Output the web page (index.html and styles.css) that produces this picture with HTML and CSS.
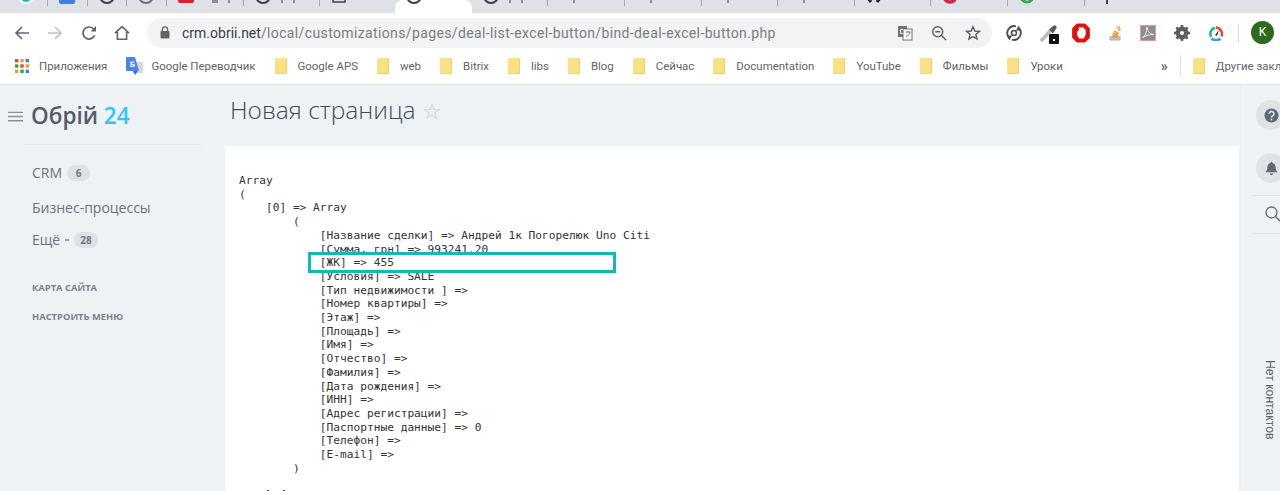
FILE: index.html
```html
<!DOCTYPE html>
<html lang="ru">
<head>
<meta charset="utf-8">
<title>Новая страница</title>
<link rel="stylesheet" href="styles.css">
</head>
<body>
<header class="chrome">
  <div class="tabs">
    <div class="tab t48 sep"><svg class="tab-ic first" viewBox="0 0 16 16"><circle cx="8" cy="8" r="7" fill="#1fb6c9" stroke="#fff" stroke-width="2"/></svg></div>
    <div class="tab t40 sep"><svg class="tab-ic" viewBox="0 0 16 16"><rect x="0" y="0" width="16" height="16" rx="2" fill="#3f7fe0"/></svg></div>
    <div class="tab t40 sep"><svg class="tab-ic" viewBox="0 0 16 16"><circle cx="8" cy="8" r="7" fill="none" stroke="#3c4043" stroke-width="2"/></svg></div>
    <div class="tab t40 sep"><svg class="tab-ic" viewBox="0 0 16 16"><circle cx="8" cy="8" r="7" fill="none" stroke="#6c7074" stroke-width="2"/></svg></div>
    <div class="tab t77 sep"><svg class="tab-ic up" viewBox="0 0 16 16"><rect x="0" y="0" width="16" height="16" rx="2" fill="#e02020"/></svg><i class="tick wide"></i><i class="tick"></i></div>
    <div class="tab t77 sep"><svg class="tab-ic" viewBox="0 0 16 16"><circle cx="8" cy="8" r="7" fill="none" stroke="#3c4043" stroke-width="2"/></svg><i class="tick"></i><i class="tick"></i></div>
    <div class="tab t75"><svg class="tab-ic" viewBox="0 0 16 16"><rect x="2" y="1" width="12" height="13" fill="none" stroke="#3c4043" stroke-width="1.5"/></svg></div>
    <div class="tab t77 active"><svg class="tab-ic" viewBox="0 0 16 16"><circle cx="8" cy="8" r="7" fill="none" stroke="#3c4043" stroke-width="2"/></svg></div>
    <div class="tab t77 sep"><svg class="tab-ic" viewBox="0 0 16 16"><circle cx="8" cy="8" r="7" fill="none" stroke="#3c4043" stroke-width="2"/></svg><i class="tick"></i><i class="tick"></i></div>
    <div class="tab t77 sep"><i class="tick off"></i></div>
    <div class="tab t77 sep"><i class="tick off"></i></div>
    <div class="tab t77 sep"><i class="tick off"></i></div>
    <div class="tab t77 sep"><i class="tick off"></i></div>
    <div class="tab t77 sep"><svg class="tab-ic" viewBox="0 0 16 16"><path d="M5 4 1 9l4 5M11 4l4 5-4 5" fill="none" stroke="#26282b" stroke-width="3"/></svg></div>
    <div class="tab t77 sep"><svg class="tab-ic" viewBox="0 0 16 16"><circle cx="8" cy="8" r="6" fill="none" stroke="#d81e4a" stroke-width="3.4"/></svg></div>
    <div class="tab t77 sep"><svg class="tab-ic" viewBox="0 0 16 16"><circle cx="8" cy="8" r="6" fill="#fff" stroke="#35a853" stroke-width="3"/></svg></div>
    <div class="tab last"><i class="tick dark"></i></div>
  </div>

  <div class="toolbar">
    <svg class="nav-ic" viewBox="0 0 16 16"><path d="M15 8H2M8 2 2 8l6 6" fill="none" stroke="#5f6368" stroke-width="1.6"/></svg>
    <svg class="nav-ic" viewBox="0 0 16 16"><path d="M1 8h13M8 2l6 6-6 6" fill="none" stroke="#bdc1c6" stroke-width="1.6"/></svg>
    <svg class="nav-ic" viewBox="0 0 16 16"><path d="M13.6 10.2A6 6 0 1 1 12.2 3.7L14 5.6" fill="none" stroke="#5f6368" stroke-width="1.7"/><path d="M15 1v5.4H9.6z" fill="#5f6368"/></svg>
    <svg class="nav-ic" viewBox="0 0 16 16"><path d="M1 8.2 8 1.6l7 6.6M3.4 7v7.2h9.2V7" fill="none" stroke="#5f6368" stroke-width="1.6"/></svg>
    <div class="omnibox">
      <svg class="lock" viewBox="0 0 10 13"><path d="M2.4 5V3.4a2.6 2.6 0 0 1 5.2 0V5" fill="none" stroke="#5f6368" stroke-width="1.3"/><rect x="0.5" y="5" width="9" height="7.5" rx="1" fill="#5f6368"/></svg>
      <div class="url"><span class="host">crm.obrii.net</span><span class="path">/local/customizations/pages/deal-list-excel-button/bind-deal-excel-button.php</span></div>
      <svg class="omni-ic" viewBox="0 0 16 16"><rect x="1" y="1" width="9" height="11" fill="#6f7377"/><rect x="6" y="4" width="9" height="11" fill="#fff" stroke="#6f7377"/><path d="M8.500 7h5M11 6v1.500M9 12c2-1 3.500-3 4-5" fill="none" stroke="#6f7377"/><path d="M6 4.500H3.500v4H6" fill="none" stroke="#fff"/></svg>
      <svg class="omni-ic" viewBox="0 0 16 16"><circle cx="6.700" cy="6.700" r="5" fill="none" stroke="#5f6368" stroke-width="1.500"/><path d="M10.500 10.500 15 15M4.200 6.700h5" fill="none" stroke="#5f6368" stroke-width="1.500"/></svg>
      <svg class="omni-ic" viewBox="0 0 16 16"><path d="M8 1.800 9.800 6l4.600.4-3.500 3 1.100 4.500L8 11.500l-4 2.400 1.100-4.500-3.500-3L6.200 6z" fill="none" stroke="#5f6368" stroke-width="1.500"/></svg>
    </div>
    <div class="exts">
      <svg class="ext sync" viewBox="0 0 16 16"><path d="M10 1.300A7 7 0 0 0 2.500 12M6 14.700A7 7 0 0 0 13.500 4" fill="none" stroke="#4c5054" stroke-width="1.900"/><path d="M.5 10.500H6L3.500 15.500zM15.500 5.500H10L12.500 .5z" fill="#4c5054"/><circle cx="8" cy="8" r="2.500" fill="none" stroke="#4c5054" stroke-width="1.600"/></svg>
      <svg class="ext drop" viewBox="0 0 20 20"><path d="M2 17 12 6" stroke="#b9bcc0" stroke-width="3.500"/><path d="M10 5.500 14 9.500 17 5a2 2 0 0 0-3-3z" fill="#55595d"/><rect x="10" y="10" width="10" height="10" rx="1" fill="#111"/><rect x="14" y="15" width="2" height="2" fill="#fff"/></svg>
      <svg class="ext stop" viewBox="0 0 16 18"><path d="M5 .5h6a2 2 0 0 1 1.500.7l3 3a2 2 0 0 1 .5 1.300v7a2 2 0 0 1-.5 1.300l-3 3a2 2 0 0 1-1.500.7H5a2 2 0 0 1-1.500-.7l-3-3A2 2 0 0 1 0 12.500v-7a2 2 0 0 1 .5-1.300l3-3A2 2 0 0 1 5 .5z" fill="#e01010"/><path d="M4.500 7.500a.800.800 0 0 1 1.500-.2V4.500a.900.900 0 0 1 1.500-.3.900.900 0 0 1 1.700.1.900.900 0 0 1 1.700.5v1a.800.800 0 0 1 1.300.5v4.200L10.500 14H6.500L4.500 11z" fill="#fff"/></svg>
      <svg class="ext stack" viewBox="0 0 16 16"><path d="M3 11v4h10v-4" fill="#c3c6c9" stroke="#a8acb0"/><path d="M5 12h6M5.200 10l5.600.6M5.800 8l5.400 1.600M7 5.800l4.800 2.800" stroke="#e8973a" stroke-width="1.400"/><path d="M9.500 1l3 4.800M12 .8l1.200 5" stroke="#f0b35c" stroke-width="1.400"/></svg>
      <svg class="ext pdf" viewBox="0 0 16 16"><rect x=".5" y=".5" width="15" height="15" fill="#8c8e92" stroke="#e19a9c"/><path d="M2.500 12.500c3-1.500 4.500-6 4-9.500-.2-1 1-1 1 0 0 3.500 2.500 6 6 6.500-3.500 0-7 1-11 3z" fill="none" stroke="#eee" stroke-width="1"/></svg>
      <svg class="ext gear" viewBox="0 0 16 16"><circle cx="8" cy="8" r="4.200" fill="none" stroke="#5b5e62" stroke-width="4.400"/><path d="M8 0v16M0 8h16M2.300 2.300l11.400 11.400M13.700 2.300 2.300 13.700" stroke="#5b5e62" stroke-width="2.600" stroke-dasharray="3 10"/></svg>
      <svg class="ext gauge" viewBox="0 0 16 16"><path d="M3 12a6.500 6.500 0 0 1 4-9.300" fill="none" stroke="#1fb58f" stroke-width="2.500"/><path d="M8 2.500a6.500 6.500 0 0 1 5.500 9" fill="none" stroke="#e5453c" stroke-width="2.500"/><path d="M3.500 13.500a6.500 6.500 0 0 0 9 0" fill="none" stroke="#2fa3dc" stroke-width="2.500"/><path d="M7 10l4-5-2 6z" fill="#333"/></svg>
      <span class="ext-sep"></span>
      <span class="avatar">K</span>
    </div>
  </div>

  <div class="bookmarks">
    <div class="bm apps">
      <svg class="grid-ic" viewBox="0 0 14 14"><rect width="3.400" height="3.400" fill="#e0452f"/><rect x="5.300" width="3.400" height="3.400" fill="#e0a42a"/><rect x="10.600" width="3.400" height="3.400" fill="#3f7fe0"/><rect y="5.300" width="3.400" height="3.400" fill="#3f9d4f"/><rect x="5.300" y="5.300" width="3.400" height="3.400" fill="#e0452f"/><rect x="10.600" y="5.300" width="3.400" height="3.400" fill="#e0a42a"/><rect y="10.600" width="3.400" height="3.400" fill="#e0a42a"/><rect x="5.300" y="10.600" width="3.400" height="3.400" fill="#3f9d4f"/><rect x="10.600" y="10.600" width="3.400" height="3.400" fill="#3f7fe0"/></svg>
      <span>Приложения</span>
    </div>
    <div class="bm gt">
      <svg class="gt-ic" viewBox="0 0 17 18"><rect x="7" y="5" width="10" height="11" fill="#d6d8da"/><path d="M0 1a1 1 0 0 1 1-1h8l4 14H1a1 1 0 0 1-1-1z" fill="#4a86e8"/><path d="M7 14h5l-3 4z" fill="#3b6fc4"/><path d="M8.500 5H5v4.500h3V7.300H6.200" fill="none" stroke="#fff" stroke-width="1.200"/></svg>
      <span>Google Переводчик</span>
    </div>
    <div class="bm"><i class="folder"></i><span>Google APS</span></div>
    <div class="bm"><i class="folder"></i><span>web</span></div>
    <div class="bm"><i class="folder"></i><span>Bitrix</span></div>
    <div class="bm"><i class="folder"></i><span>libs</span></div>
    <div class="bm"><i class="folder"></i><span>Blog</span></div>
    <div class="bm"><i class="folder"></i><span>Сейчас</span></div>
    <div class="bm"><i class="folder"></i><span>Documentation</span></div>
    <div class="bm"><i class="folder"></i><span>YouTube</span></div>
    <div class="bm"><i class="folder"></i><span>Фильмы</span></div>
    <div class="bm"><i class="folder"></i><span>Уроки</span></div>
    <div class="bm-end">
      <span class="more">»</span>
      <span class="bm-sep"></span>
      <div class="bm"><i class="folder"></i><span>Другие закладки</span></div>
    </div>
  </div>
</header>

<div class="page">
  <aside class="sidebar">
    <div class="brand">
      <svg class="burger" viewBox="0 0 16 11"><path d="M0 1h16M0 5.500h16M0 10h16" stroke="#8a9299" stroke-width="1.400"/></svg>
      <span class="logo">Обрій <b>24</b></span>
    </div>
    <nav class="menu">
      <div class="item first-item">CRM <span class="badge">6</span></div>
      <div class="item second-item">Бизнес-процессы</div>
      <div class="item third-item">Ещё <span class="caret"></span> <span class="badge">28</span></div>
    </nav>
    <div class="link map">КАРТА САЙТА</div>
    <div class="link">НАСТРОИТЬ МЕНЮ</div>
  </aside>

  <main class="content">
    <h1 class="title">Новая страница <span class="star">☆</span></h1>
    <section class="panel">
<pre class="dump">Array
(
    [0] =&gt; Array
        (
            [Название сделки] =&gt; Андрей 1к Погорелюк Uno Citi
            [Сумма, грн] =&gt; 993241.20
            [ЖК] =&gt; 455
            [Условия] =&gt; SALE
            [Тип недвижимости ] =&gt; 
            [Номер квартиры] =&gt; 
            [Этаж] =&gt; 
            [Площадь] =&gt; 
            [Имя] =&gt; 
            [Отчество] =&gt; 
            [Фамилия] =&gt; 
            [Дата рождения] =&gt; 
            [ИНН] =&gt; 
            [Адрес регистрации] =&gt; 
            [Паспортные данные] =&gt; 0
            [Телефон] =&gt; 
            [E-mail] =&gt; 
        )</pre>
      <div class="next-row"></div>
      <div class="highlight"></div>
    </section>
  </main>

  <aside class="rail">
    <div class="round"><svg viewBox="0 0 16 16"><circle cx="8" cy="8" r="7.500" fill="#5d6b78"/><path d="M5.500 6.200a2.500 2.500 0 1 1 3.700 2.200c-.8.500-1.200.9-1.200 1.800" fill="none" stroke="#e6e9eb" stroke-width="1.600"/><circle cx="8" cy="12.300" r="1" fill="#e6e9eb"/></svg></div>
    <div class="round bell"><svg viewBox="0 0 16 18"><path d="M8 1a1.200 1.200 0 0 1 1.200 1.300C12 3 13 5.500 13 8c0 3 1 4 2.500 5.500H.5C2 12 3 11 3 8c0-2.500 1-5 3.800-5.700A1.200 1.200 0 0 1 8 1z" fill="#5d6b78"/><path d="M6 15h4a2 2 0 0 1-4 0z" fill="#5d6b78"/></svg></div>
    <div class="search"><svg viewBox="0 0 17 17"><circle cx="6.500" cy="6.500" r="5.500" fill="none" stroke="#5d6b78" stroke-width="1.300"/><path d="M10.500 10.500 16.500 16.500" stroke="#5d6b78" stroke-width="1.500"/></svg></div>
    <div class="contacts">Нет контактов</div>
  </aside>
</div>
</body>
</html>
```
FILE: styles.css
```css
* { box-sizing: border-box; }
html, body { margin: 0; height: 491px; overflow: hidden; }
body { background: #eef2f4; font-family: "Open Sans", sans-serif; display: flex; flex-direction: column; }

.chrome { flex: none; height: 85px; background: #fff; border-bottom: 1px solid #e3e5e8; }

.tabs { display: flex; align-items: flex-start; height: 13px; background: #dee1e6; overflow: hidden; }
.tab { flex: none; height: 13px; display: flex; align-items: flex-start; padding-left: 11px; gap: 10px; overflow: hidden; }
.t48 { width: 48px; } .t40 { width: 39.7px; } .t77 { width: 76.6px; } .t75 { width: 75px; }
.last { flex: 1; }
.sep { border-right: 1px solid #a4a7ab; height: 6px; }
.tab.active { background: #fff; height: 13px; border-radius: 8px 8px 0 0; }
.tab-ic { flex: none; width: 16px; height: 16px; margin-top: -12px; }
.tab-ic.first { margin-left: 7px; }
.tab-ic.up { margin-top: -13px; }
.tick { display: block; flex: none; width: 2px; height: 3px; background: #8b8e92; }
.tick.wide { width: 6px; margin-left: 8px; }
.tick.off { margin-left: 14px; }
.tick.dark { background: #444; margin-left: 10px; height: 4px; }

.toolbar { height: 35px; display: flex; align-items: center; padding-left: 14px; padding-top: 4px; }
.nav-ic { flex: none; width: 16px; height: 16px; margin-right: 17.25px; }
.omnibox { flex: none; width: 845px; height: 30px; background: #f1f3f4; border-radius: 15px; display: flex; align-items: center; padding-left: 13px; }
.lock { flex: none; width: 10px; height: 13px; }
.url { flex: 1; margin-left: 12px; font: 14px/18px Roboto, sans-serif; color: #7a7d81; white-space: nowrap; }
.host { color: #3c4043; }
.path { letter-spacing: .37px; }
.omni-ic { flex: none; width: 16px; height: 16px; margin-right: 18px; }
.omni-ic:last-child { margin-right: 11px; }
.exts { flex: none; display: flex; align-items: center; margin-left: 14px; }
.ext { flex: none; width: 16px; height: 16px; margin-right: 18px; }
.drop { width: 20px; height: 20px; margin-left: -1px; margin-right: 13px; margin-top: 3px; }
.stop { width: 18px; height: 20px; margin-right: 17px; }
.stack { margin-right: 17px; }
.gauge { margin-right: 14px; }
.ext-sep { width: 1px; height: 18px; background: #d5d7da; margin-right: 12px; }
.avatar { width: 23px; height: 23px; border-radius: 50%; background: #2e6b1f; color: #fff; font: 12px/23px Roboto, sans-serif; text-align: center; }

.bookmarks { height: 36px; display: flex; align-items: center; padding-left: 15px; gap: 19px; white-space: nowrap; font: 11.45px/16px Roboto, sans-serif; color: #5f6368; overflow: hidden; }
.bm { display: flex; align-items: center; gap: 11px; flex: none; }
.grid-ic { width: 14px; height: 14px; }
.gt-ic { width: 17px; height: 18px; }
.gt { gap: 8px; }
.apps { gap: 10px; }
.folder { display: block; width: 12px; height: 16px; background: #fbe184; border-radius: 1px; box-shadow: inset -1px -1px 0 #f4d06a; }
.bm-end { margin-left: 79px; display: flex; align-items: center; gap: 12px; }
.more { font-size: 14px; font-weight: 700; color: #5f6368; }
.bm-sep { width: 1px; height: 22px; background: #dfe1e4; }

.page { flex: 1; display: flex; min-height: 0; }
.sidebar { flex: none; width: 225px; padding-top: 16px; }
.brand { display: flex; align-items: center; height: 30px; padding-left: 8px; }
.burger { flex: none; width: 15px; height: 11px; margin-right: 8px; }
.logo { font-size: 22.5px; font-weight: 600; line-height: 30px; color: #535c69; }
.logo b { font-weight: 600; color: #2fc6f6; }
.menu { margin: 13px 23px 0 23px; border-top: 1px solid #e7ebed; padding-left: 9px; }
.item { font-size: 14px; line-height: 20px; color: #6b737c; display: flex; align-items: center; gap: 5px; }
.first-item { margin-top: 18px; }
.second-item { margin-top: 15px; }
.third-item { margin-top: 12px; }
.badge { display: inline-block; min-width: 23px; height: 16px; padding: 0 6px; border-radius: 8px; background: #dde1e5; color: #717a84; font-size: 10px; font-weight: 700; line-height: 16px; text-align: center; }
.caret { width: 4px; height: 2px; background: #9aa1a8; }
.link { margin: 17px 0 0 32px; font-size: 9.4px; font-weight: 700; line-height: 12px; color: #7a828b; }
.map { margin-top: 32px; }

.content { flex: none; width: 1015px; display: flex; flex-direction: column; }
.title { margin: 0; height: 61px; padding: 8px 0 0 5px; font-size: 24.5px; font-weight: 300; line-height: 34px; color: #414a55; white-space: nowrap; }
.star { color: #c5cbd1; font-family: "DejaVu Sans", sans-serif; font-size: 22px; }
.panel { position: relative; flex: 1; background: #fff; margin-right: 1px; overflow: hidden; padding: 28px 0 0 14px; }
.dump { margin: 0; font: 11.2px/13.7px "DejaVu Sans Mono", monospace; color: #333; }
.next-row { width: 18px; height: 3px; margin: 15px 0 0 28px; border-left: 2px solid #555; border-right: 2px solid #555; }
.highlight { position: absolute; left: 83px; top: 106px; width: 308px; height: 21px; border: 3px solid #14b8b4; }

.rail { flex: 1; min-width: 0; position: relative; border-left: 1px solid #e8ecef; }
.round { width: 30px; height: 30px; border-radius: 50%; background: #dfe3e6; margin: 15px 0 0 15px; display: flex; align-items: center; justify-content: center; }
.round svg { width: 15px; height: 15px; }
.bell { margin-top: 23px; }
.search { margin: 12px 0 0 10px; border-top: 1px solid #e3e7ea; border-bottom: 1px solid #e3e7ea; height: 39px; padding: 10px 0 0 14px; }
.search svg { display: block; width: 17px; height: 17px; }
.contacts { position: absolute; left: 22px; top: 275px; writing-mode: vertical-rl; font: 12.2px/14px "Liberation Sans", sans-serif; color: #5a6570; white-space: nowrap; }
```
